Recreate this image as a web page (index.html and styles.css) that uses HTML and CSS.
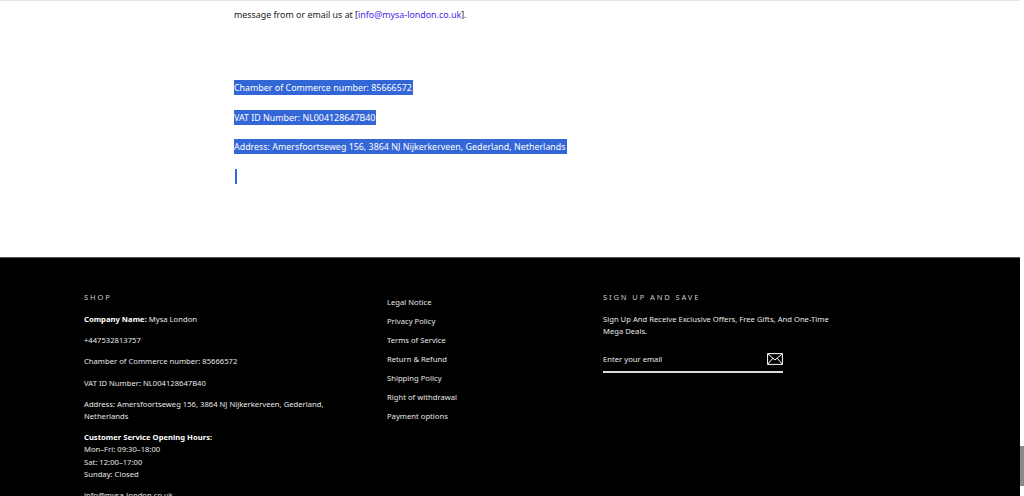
FILE: index.html
```html
<!DOCTYPE html>
<html lang="en">
<head>
<meta charset="utf-8">
<title>Mysa London</title>
<link rel="stylesheet" href="styles.css">
</head>
<body>
<div class="page">
  <div class="main">
    <section class="content">
      <p class="lead">message from or email us at [<a href="#" class="link">info@mysa-london.co.uk</a>].</p>
      <p class="line"><span class="sel">Chamber of Commerce number: 85666572</span></p>
      <p class="line"><span class="sel">VAT ID Number: NL004128647B40</span></p>
      <p class="line"><span class="sel">Address: Amersfoortseweg 156, 3864 NJ Nijkerkerveen, Gederland, Netherlands</span></p>
      <p class="line"><span class="caret"></span></p>
    </section>
    <footer class="footer">
      <div class="col col-shop">
        <h3 class="heading">Shop</h3>
        <p class="ft"><strong>Company Name:</strong> Mysa London</p>
        <p class="ft">+447532813757</p>
        <p class="ft">Chamber of Commerce number: 85666572</p>
        <p class="ft">VAT ID Number: NL004128647B40</p>
        <p class="ft">Address: Amersfoortseweg 156, 3864 NJ Nijkerkerveen, Gederland, Netherlands</p>
        <p class="ft"><strong>Customer Service Opening Hours:</strong><br>Mon–Fri: 09:30–18:00<br>Sat: 12:00–17:00<br>Sunday: Closed</p>
        <p class="ft">info@mysa-london.co.uk</p>
      </div>
      <ul class="col col-links">
        <li>Legal Notice</li>
        <li>Privacy Policy</li>
        <li>Terms of Service</li>
        <li>Return &amp; Refund</li>
        <li>Shipping Policy</li>
        <li>Right of withdrawal</li>
        <li>Payment options</li>
      </ul>
      <div class="col col-signup">
        <h3 class="heading">Sign up and save</h3>
        <p class="ft signup-text">Sign Up And Receive Exclusive Offers, Free Gifts, And One-Time Mega Deals.</p>
        <div class="email">
          <span>Enter your email</span>
          <svg class="env" viewBox="0 0 16 12" width="16" height="12" aria-hidden="true"><path d="M.6.6h14.8v10.8H.6zM.6.6 8 7l7.4-6.4M.6 11.4 5.8 5.2M15.4 11.4 10.2 5.2" fill="none" stroke="#fff" stroke-width="1"/></svg>
        </div>
      </div>
    </footer>
  </div>
  <div class="scrollbar"><div class="thumb"></div></div>
</div>
</body>
</html>
```
FILE: styles.css
```css
html, body { margin: 0; padding: 0; }
body { background: #fff; font-family: "Noto Sans", "Open Sans", sans-serif; }
.page { display: flex; width: 1024px; height: 496px; overflow: hidden; }
.main { width: 1020px; flex: none; }
.content { height: 257px; box-sizing: border-box; padding: 0 0 0 234px; border-top: 1px solid #e4e4e4; color: #222; font-size: 8.9px; }
.content p { margin: 0; }
.lead { padding-top: 6px; height: 72px; box-sizing: border-box; line-height: 15px; }
.link { color: #4a24f0; text-decoration: none; }
.line { height: 29.5px; line-height: 15px; padding-top: 7px; box-sizing: border-box; }
.sel { background: #3366d6; color: #fff; display: inline-block; padding-right: 1px; }
.caret { display: inline-block; width: 2px; height: 15px; background: #3366d6; margin-left: 1px; }
.footer { background: #000; height: 239px; color: #e8e8e8; font-size: 7.6px; letter-spacing: 0.03px; line-height: 12.2px; display: grid; grid-template-columns: 303px 216px 240px; padding: 33px 0 0 84px; box-sizing: border-box; border-top: 1px solid #555; }
.col { margin: 0; padding: 0; min-width: 0; }
.heading { margin: 0 0 10px; font-size: 7.5px; font-weight: 400; letter-spacing: 1.9px; text-transform: uppercase; color: #ccc; line-height: 12px; }
.ft { margin: 0 0 9px; }
.ft strong { font-weight: 700; color: #fff; }
.col-shop { width: 250px; }
.col-links { list-style: none; padding-top: 5px; }
.col-links li { height: 19px; line-height: 12px; }
.col-signup { width: 236px; }
.signup-text { margin-bottom: 9px; }
.email { width: 180px; height: 27px; display: flex; justify-content: space-between; align-items: center; border-bottom: 2px solid #dcdcdc; box-sizing: border-box; }
.env { flex: none; }
.scrollbar { width: 4px; flex: none; background: #fff; padding-top: 446px; box-sizing: border-box; }
.thumb { height: 40px; background: #8a8a8a; }
```
